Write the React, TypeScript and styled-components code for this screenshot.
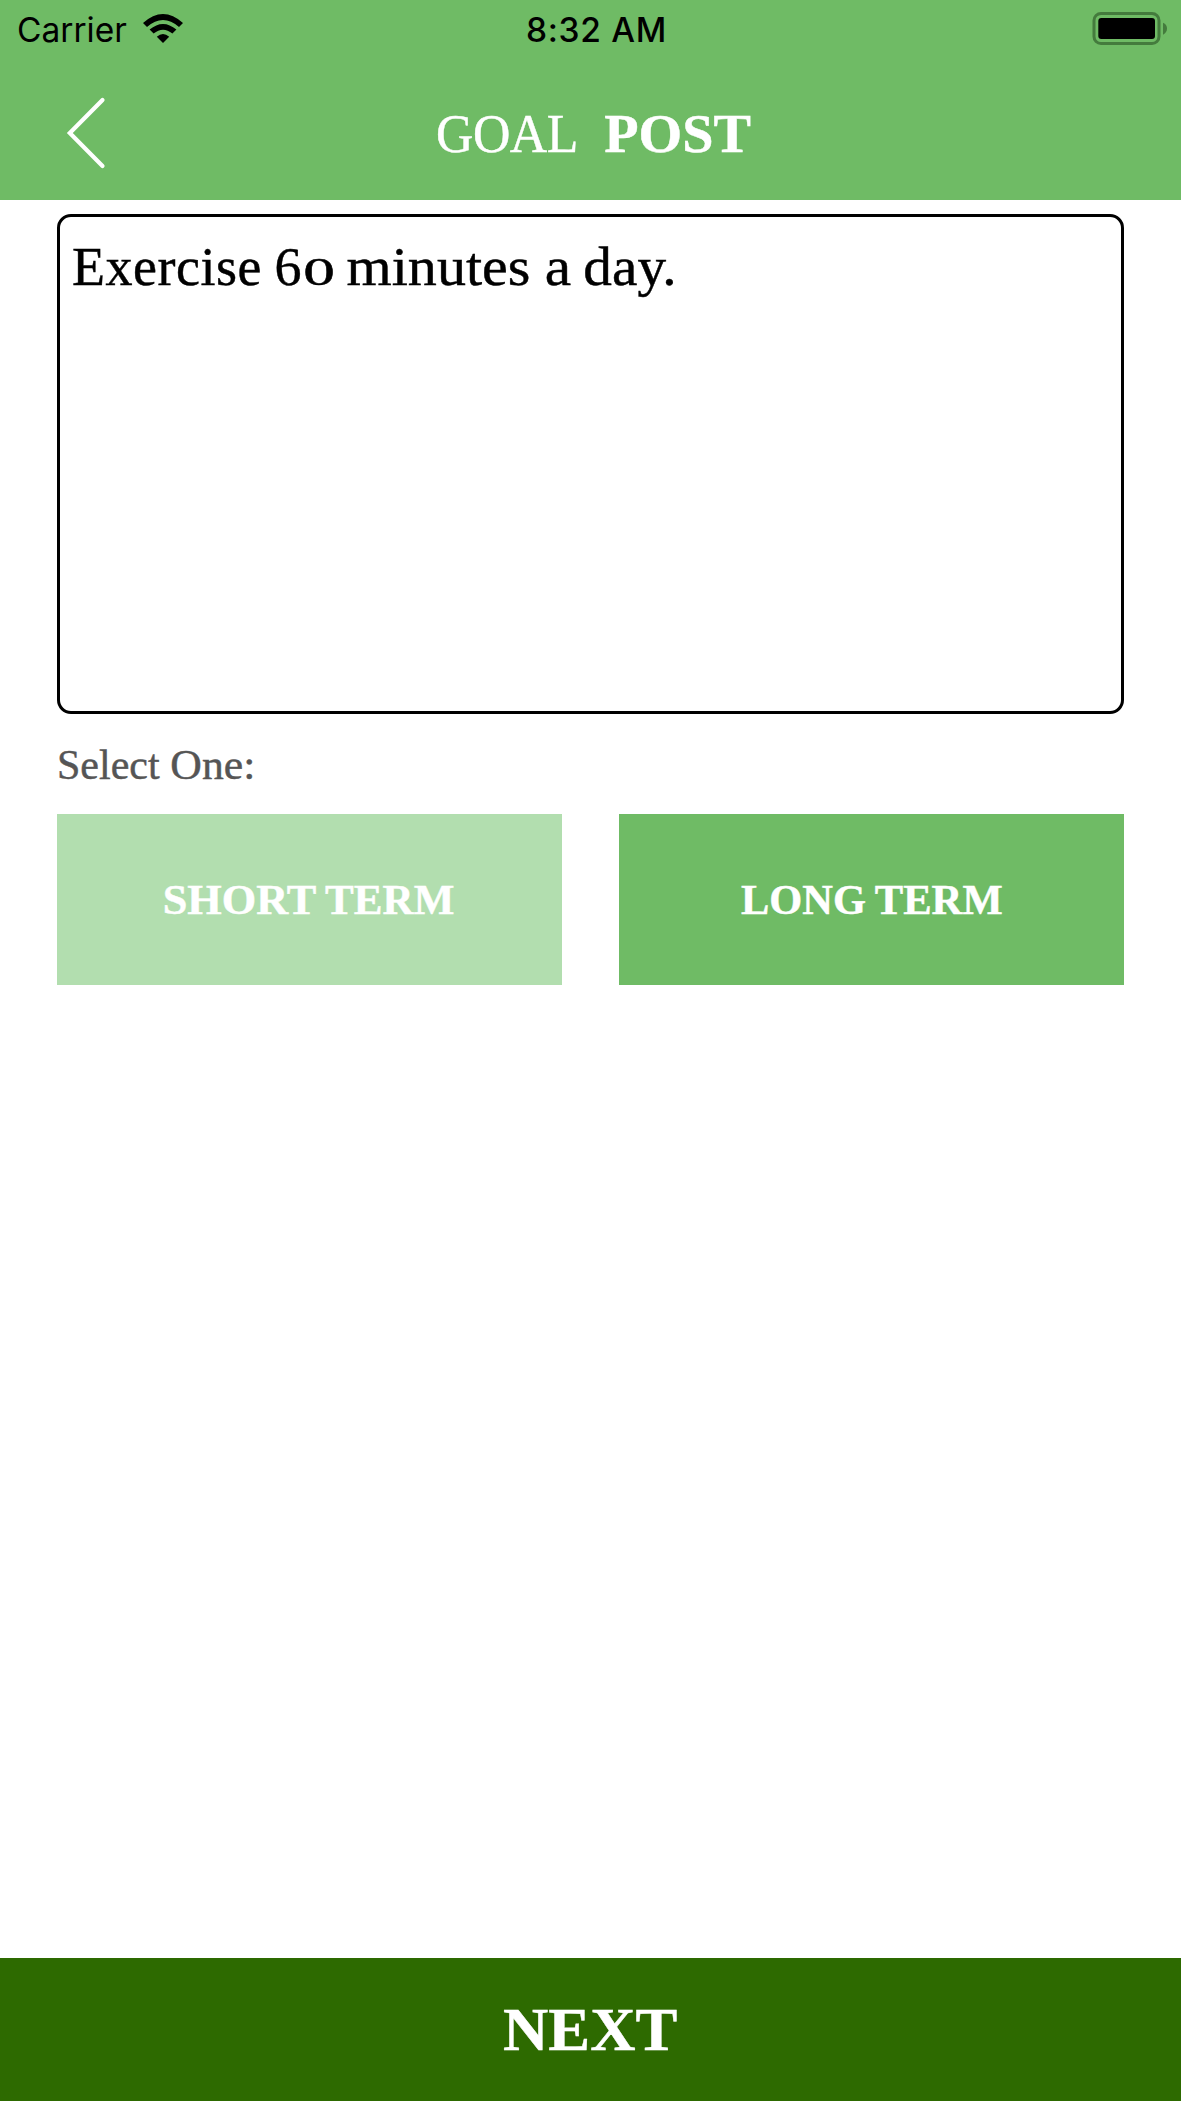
import React from "react";
import styled, { createGlobalStyle } from "styled-components";

const GlobalStyle = createGlobalStyle`
  *, *::before, *::after { box-sizing: border-box; }
  body { margin: 0; background: #fff; }
`;

const serif = `Georgia, "Liberation Serif", serif`;
const green = "#6fbb65";

const Screen = styled.div`
  display: flex;
  flex-direction: column;
  width: 1181px;
  height: 2101px;
  background: #fff;
  font-family: ${serif};
`;

const Header = styled.header`
  height: 200px;
  background: ${green};
`;

const StatusBar = styled.div`
  display: grid;
  grid-template-columns: 1fr auto 1fr;
  align-items: center;
  height: 60px;
  padding: 0 14px 0 17px;
  font-family: Inter, sans-serif;
  font-size: 33.5px;
  color: #000;
`;

const Carrier = styled.div`
  display: flex;
  align-items: center;
  gap: 16px;
`;

const WifiIcon = styled.svg`
  margin-bottom: 3px;
`;

const Clock = styled.div`
  padding-left: 9px;
  font-weight: 550;
  letter-spacing: 0.7px;
`;

const BatteryIcon = styled.svg`
  justify-self: end;
  margin-bottom: 3px;
`;

const TitleBar = styled.div`
  display: grid;
  grid-template-columns: 120px 1fr 120px;
  align-items: center;
  height: 146px;
`;

const BackButton = styled.button`
  display: flex;
  align-items: center;
  padding: 0 0 0 64px;
  border: 0;
  background: none;
`;

const Title = styled.h1`
  margin: 0;
  padding: 1px 0 0;
  text-align: center;
  font-size: 54px;
  line-height: 62px;
  font-weight: 400;
  color: #fff;
`;

const Word = styled.span<{ $track?: number; $before?: number; $bold?: boolean; $stretch?: number }>`
  display: inline-block;
  letter-spacing: ${(p) => p.$track ?? 0}px;
  margin-left: ${(p) => p.$before ?? 0}px;
  font-weight: ${(p) => (p.$bold ? 700 : "inherit")};
  transform: scaleX(${(p) => p.$stretch ?? 1});
  -webkit-text-stroke: 0.45px currentColor;
`;

const LowFigure = styled.span`
  display: inline-block;
  font-size: 40px;
  line-height: 1;
  transform: scaleX(1.58);
  margin: 0 5px 0 8px;
`;

const Content = styled.main`
  flex: 1;
  padding: 14px 57px 0;
`;

const GoalBox = styled.div`
  height: 500px;
  padding: 19px 12px;
  border: 3px solid #000;
  border-radius: 14px;
  font-size: 54px;
  line-height: 62px;
  color: #000;
`;

const Prompt = styled.p`
  margin: 27px 0 25px;
  font-size: 42px;
  line-height: 48px;
  color: #555;
`;

const Choices = styled.div`
  display: grid;
  grid-template-columns: 1fr 1fr;
  gap: 57px;
`;

const Choice = styled.button<{ $dim?: boolean }>`
  height: 171px;
  padding: 0;
  border: 0;
  background: ${(p) => (p.$dim ? "#b2deaf" : green)};
  color: #fff;
  font: 700 41.8px/48px ${serif};
`;

const NextButton = styled.button`
  height: 143px;
  padding: 0;
  border: 0;
  background: #2d6a00;
  color: #fff;
  font: 700 60.6px/70px ${serif};
`;

export default function App() {
  return (
    <>
      <GlobalStyle />
      <Screen>
        <Header>
          <StatusBar>
            <Carrier>
              Carrier
              <WifiIcon width="40" height="29" viewBox="0 0 40 29">
                <path d="M0 9Q20-9 40 9L36 13Q20-1 4 13Z" />
                <path d="M6.6 15.6Q20 4.4 33.4 15.6L29.4 19.6Q20 12 10.6 19.6Z" />
                <path d="M13.8 22.8Q20 17.2 26.2 22.8L20 29Z" />
              </WifiIcon>
            </Carrier>
            <Clock>8:32 AM</Clock>
            <BatteryIcon width="75" height="33" viewBox="0 0 75 33">
              <rect x="2" y="1.5" width="65" height="30" rx="7" fill="none" stroke="#447b3d" strokeWidth="3" />
              <rect x="6.3" y="6" width="56.7" height="21" rx="3" />
              <path d="M71 10.7Q75 12.5 75 16.5T71 22.7Z" fill="#447b3d" />
            </BatteryIcon>
          </StatusBar>
          <TitleBar>
            <BackButton aria-label="Back">
              <svg width="44" height="74" viewBox="0 0 44 74" fill="none" stroke="#fff" strokeWidth="4.2" strokeLinecap="round">
                <path d="M38.5 4L5.8 37L38.5 70" />
              </svg>
            </BackButton>
            <Title>
              <Word $stretch={0.96} $track={-0.5}>GOAL</Word> <Word $bold $stretch={1.04} $before={13}>POST</Word>
            </Title>
          </TitleBar>
        </Header>
        <Content>
          <GoalBox>
            <Word $track={0.5}>Exercise</Word> <Word $before={-1}>6<LowFigure>0</LowFigure></Word>{" "}
            <Word $stretch={1.075} $before={5}>minutes</Word>{" "}
            <Word $stretch={1.1} $before={9}>a</Word>{" "}
            <Word $stretch={1.06} $before={2}>day.</Word>
          </GoalBox>
          <Prompt>
            <Word>Select</Word> <Word $stretch={1.04} $before={2}>One:</Word>
          </Prompt>
          <Choices>
            <Choice $dim>
              <Word $stretch={1.06}>SHORT</Word> <Word $stretch={1.03} $before={5}>TERM</Word>
            </Choice>
            <Choice>
              <Word $stretch={1.015}>LONG</Word> <Word $stretch={1.02} $before={1}>TERM</Word>
            </Choice>
          </Choices>
        </Content>
        <NextButton>
          <Word $stretch={1.035}>NEXT</Word>
        </NextButton>
      </Screen>
    </>
  );
}
